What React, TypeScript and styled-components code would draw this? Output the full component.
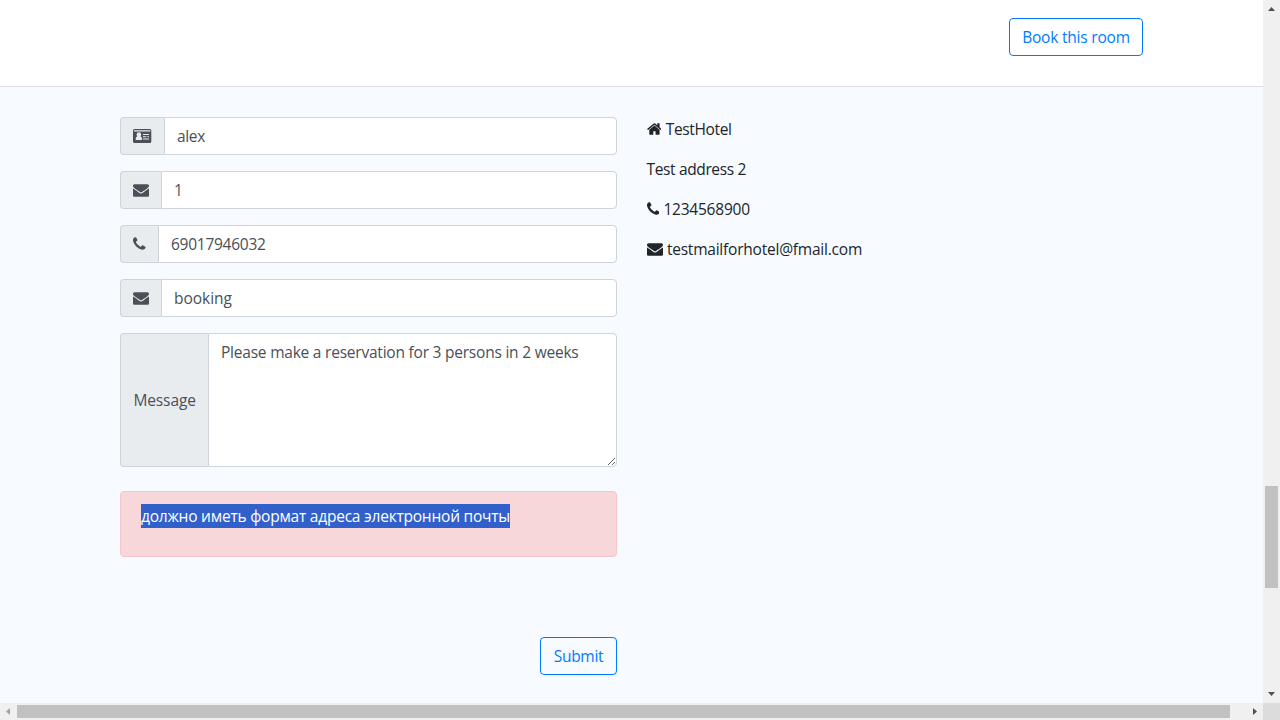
import React from "react";
import styled, { createGlobalStyle } from "styled-components";

const GlobalStyle = createGlobalStyle`
  *, *::before, *::after { box-sizing: border-box; }
  body {
    margin: 0;
    overflow: hidden;
    font-family: "Open Sans", "Noto Sans", sans-serif;
    font-size: 15.5px;
    line-height: 24px;
    color: #212529;
    background: #f7faff;
  }
`;

const Frame = styled.div`
  display: grid;
  grid-template-columns: 1fr 17px;
  grid-template-rows: 1fr 17px;
  width: 1280px;
  height: 720px;
`;

const Page = styled.main`
  background: #f7faff;
  overflow: hidden;
`;

const RoomBar = styled.header`
  display: flex;
  justify-content: flex-end;
  height: 87px;
  padding: 18px 120px 0;
  background: #fff;
  border-bottom: 1px solid #dcdfe3;
`;

const OutlineButton = styled.button<{ $width: number; $spacing: number }>`
  width: ${(p) => p.$width}px;
  height: 38px;
  padding: 0;
  font: inherit;
  letter-spacing: ${(p) => p.$spacing}px;
  white-space: nowrap;
  color: #007bff;
  background: transparent;
  border: 1px solid #007bff;
  border-radius: 4px;
`;

const Columns = styled.section`
  display: grid;
  grid-template-columns: 497px 1fr;
  column-gap: 29.5px;
  padding: 30px 120px 0;
`;

const Form = styled.form`
  display: flex;
  flex-direction: column;
`;

const Group = styled.div`
  display: flex;
  margin-bottom: 16px;
`;

const Addon = styled.span<{ $width: number }>`
  display: flex;
  flex: 0 0 ${(p) => p.$width}px;
  align-items: center;
  padding-left: 12.4px;
  letter-spacing: -0.1px;
  color: #495057;
  background: #e9ecef;
  border: 1px solid #ced4da;
  border-right: 0;
  border-radius: 4px 0 0 4px;
`;

const Input = styled.input<{ $spacing: number }>`
  flex: 1;
  min-width: 0;
  height: 38px;
  padding: 6px 12px;
  font: inherit;
  letter-spacing: ${(p) => p.$spacing}px;
  color: #495057;
  background: #fff;
  border: 1px solid #ced4da;
  border-radius: 0 4px 4px 0;
  outline: 0;
`;

const TextArea = styled.textarea`
  flex: 1;
  min-width: 0;
  height: 134px;
  padding: 6px 12px;
  font: inherit;
  letter-spacing: -0.22px;
  color: #495057;
  background: #fff;
  border: 1px solid #ced4da;
  border-radius: 0 4px 4px 0;
  outline: 0;
  overflow: auto;
  resize: vertical;
`;

const Alert = styled.div`
  height: 66px;
  margin: 8px 0 80px;
  padding: 12px 20px;
  background: #f8d7da;
  border: 1px solid #f5c6cb;
  border-radius: 4px;
`;

const Selected = styled.span`
  display: inline-block;
  width: 369px;
  height: 24px;
  overflow: hidden;
  white-space: nowrap;
  letter-spacing: -0.22px;
  color: #fff;
  background: #3160cb;
`;

const Actions = styled.div`
  display: flex;
  justify-content: flex-end;
`;

const Contact = styled.p<{ $spacing: number }>`
  display: flex;
  align-items: center;
  gap: 4.4px;
  height: 24px;
  margin: 0 0 16px;
  letter-spacing: ${(p) => p.$spacing}px;
`;

const Glyph = styled.svg`
  display: block;
  flex: none;
  height: 16px;
  fill: currentColor;
`;

const VerticalBar = styled.div`
  display: flex;
  flex-direction: column;
  align-items: center;
  background: #f0f0f0;
`;

const HorizontalBar = styled.div`
  display: flex;
  align-items: center;
  background: #f0f0f0;
`;

const Arrow = styled.svg`
  display: block;
  flex: none;
  width: 17px;
  height: 17px;
`;

const VerticalThumb = styled.div`
  width: 13px;
  height: 102px;
  margin: 469px 0 98px;
  background: #c1c1c1;
`;

const HorizontalThumb = styled.div`
  width: 1213px;
  height: 13px;
  margin-right: 16px;
  background: #c1c1c1;
`;

const Corner = styled.div`
  background: #dcdcdc;
`;

const Envelope = () => (
  <Glyph viewBox="0 0 1792 1792" width="16">
    <path d="M1792 710v794q0 66-47 113t-113 47h-1472q-66 0-113-47t-47-113v-794q44 49 101 87 362 246 497 345 57 42 92.500 65.500t94.500 48 110 24.500h2q51 0 110-24.500t94.500-48 92.500-65.500q170-123 498-345 57-39 100-87zm0-294q0 79-49 151t-122 123q-376 261-468 325-10 7-42.500 31t-54 38.500-52 32.500-57.500 27-50 9h-2q-23 0-50-9t-57.500-27-52-32.500-54-38.500-42.500-31q-91-64-262-182.500t-205-142.500q-62-42-117-115.500t-55-136.500q0-78 41.500-130t118.500-52h1472q65 0 112.500 47t47.500 113z" />
  </Glyph>
);

const Phone = () => (
  <Glyph viewBox="192 0 1408 1792" width="12.57">
    <path d="M1600 1240q0 27-10 70.500t-21 68.500q-21 50-122 106-94 51-186 51-27 0-53-3.500t-57.500-12.500-47-14.500-55.500-20.500-49-18q-98-35-175-83-127-79-264-216t-216-264q-48-77-83-175-3-9-18-49t-20.500-55.500-14.500-47-12.500-57.500-3.500-53q0-92 51-186 56-101 106-122 25-11 68.500-21t70.500-10q14 0 21 3 18 6 53 76 11 19 30 54t35 63.500 31 53.500q3 4 17.500 25t21.500 35.500 7 28.500q0 20-28.500 50t-62 55-62 53-28.500 46q0 9 5 22.500t8.500 20.500 14 24 11.500 19q76 137 174 235t235 174q2 1 19 11.500t24 14 20.500 8.500 22.500 5q18 0 46-28.500t53-62 55-62 50-28.500q14 0 28.500 7t35.500 21.500 25 17.500q25 15 53.500 31t63.500 35 54 30q70 35 76 53 3 7 3 21z" />
  </Glyph>
);

const Home = () => (
  <Glyph viewBox="64 0 1664 1792" width="14.86">
    <path d="M1472 992v480q0 26-19 45t-45 19h-384v-384h-256v384h-384q-26 0-45-19t-19-45v-480q0-1 .5-3t.5-3l575-474 575 474q1 2 1 6zm223-69l-62 74q-8 9-21 11h-3q-13 0-21-7l-692-577-692 577q-12 8-24 7-13-2-21-11l-62-74q-8-10-7-23.500t11-21.500l719-599q32-26 76-26t76 26l244 204v-195q0-14 9-23t23-9h192q14 0 23 9t9 23v408l219 182q10 8 11 21.500t-7 23.500z" />
  </Glyph>
);

const IdCard = () => (
  <Glyph viewBox="0 0 18.3 16" width="18.3">
    <path
      fillRule="evenodd"
      d="M1.500 1h15.300a1.500 1.500 0 0 1 1.500 1.500v11a1.500 1.500 0 0 1-1.500 1.500H1.500A1.500 1.500 0 0 1 0 13.500v-11A1.500 1.500 0 0 1 1.500 1zM1 2.200v1.200h16.300v-1.200zM2.700 12h6.200c.3-1.900-.2-3.500-1.500-3.700.6-.5.8-1.100.8-1.700a2.300 2.300 0 0 0-4.600 0c0 .6.200 1.200.8 1.700-1.300.2-1.900 1.800-1.700 3.700zM9.900 5.900v1.100h6.100v-1.100zM9.900 8.200v1.100h3.500v-1.100zM14.400 8.200v1.100H16v-1.100zM9.900 10.500v1.100H16v-1.100z"
    />
  </Glyph>
);

export default function App() {
  return (
    <>
      <GlobalStyle />
      <Frame>
        <Page>
          <RoomBar>
            <OutlineButton $width={134} $spacing={-0.2}>Book this room</OutlineButton>
          </RoomBar>
          <Columns>
            <Form>
              <Group>
                <Addon $width={44}><IdCard /></Addon>
                <Input $spacing={-0.35} defaultValue="alex" />
              </Group>
              <Group>
                <Addon $width={41}><Envelope /></Addon>
                <Input $spacing={-0.2} defaultValue="1" />
              </Group>
              <Group>
                <Addon $width={38}><Phone /></Addon>
                <Input $spacing={-0.26} defaultValue="69017946032" />
              </Group>
              <Group>
                <Addon $width={41}><Envelope /></Addon>
                <Input $spacing={-0.03} defaultValue="booking" />
              </Group>
              <Group>
                <Addon $width={88}>Message</Addon>
                <TextArea spellCheck={false} defaultValue="Please make a reservation for 3 persons in 2 weeks" />
              </Group>
              <Alert><Selected>должно иметь формат адреса электронной почты</Selected></Alert>
              <Actions>
                <OutlineButton type="button" $width={77} $spacing={-0.3}>Submit</OutlineButton>
              </Actions>
            </Form>
            <div>
              <Contact $spacing={-0.35}><Home />TestHotel</Contact>
              <Contact $spacing={-0.36}>Test address 2</Contact>
              <Contact $spacing={-0.23}><Phone />1234568900</Contact>
              <Contact $spacing={-0.22}><Envelope />testmailforhotel@fmail.com</Contact>
            </div>
          </Columns>
        </Page>
        <VerticalBar>
          <Arrow viewBox="0 0 17 17"><path fill="#505050" d="M5 11l3.500-4L12 11z" /></Arrow>
          <VerticalThumb />
          <Arrow viewBox="0 0 17 17"><path fill="#505050" d="M5 6l3.500 4L12 6z" /></Arrow>
        </VerticalBar>
        <HorizontalBar>
          <Arrow viewBox="0 0 17 17"><path fill="#a3a3a3" d="M10 5L6 8.500l4 3.500z" /></Arrow>
          <HorizontalThumb />
          <Arrow viewBox="0 0 17 17"><path fill="#505050" d="M7 5l4 3.500L7 12z" /></Arrow>
        </HorizontalBar>
        <Corner />
      </Frame>
    </>
  );
}
